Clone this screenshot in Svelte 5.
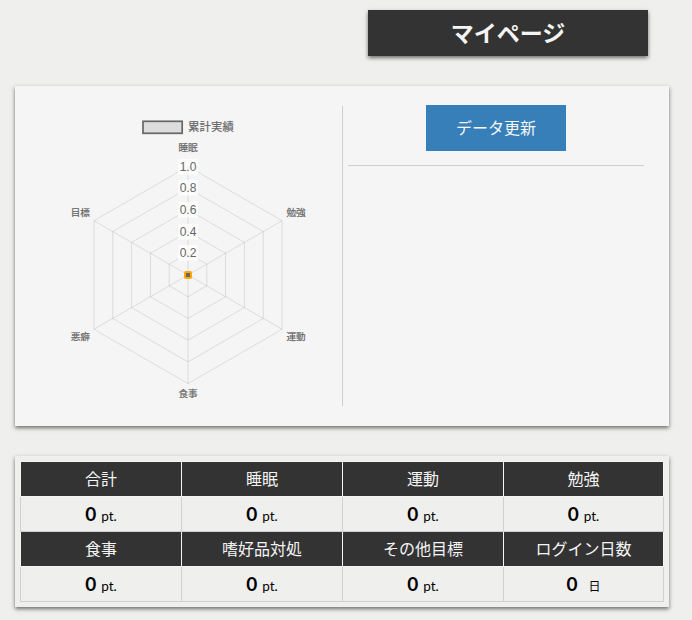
<script>
  const rows = [
    ['合計', '睡眠', '運動', '勉強'],
    ['食事', '嗜好品対処', 'その他目標', 'ログイン日数']
  ];
  const cx = 188, cy = 189, r = 108.6;
  const point = (i, radius) => {
    const a = (Math.PI / 3) * i - Math.PI / 2;
    return [cx + radius * Math.cos(a), cy + radius * Math.sin(a)];
  };
  const rings = [1, 2, 3, 4, 5].map((n) =>
    [0, 1, 2, 3, 4, 5].map((i) => point(i, (r * n) / 5).join(',')).join(' ')
  );
  const spokes = [0, 1, 2, 3, 4, 5].map((i) => point(i, r));
  const ticks = [
    ['1.0', 81], ['0.8', 102], ['0.6', 124], ['0.4', 146], ['0.2', 167]
  ];
  const labels = [
    ['睡眠', 188, 65.3], ['勉強', 296, 129.8], ['運動', 296, 254.3],
    ['食事', 188, 311.3], ['悪癖', 80.3, 254.3], ['目標', 80.3, 129.8]
  ];
</script>

<main>
  <h1>マイページ</h1>
  <section class="summary">
    <div class="chart">
      <svg width="327" height="340" viewBox="15 0 327 340">
        <rect x="143" y="35.3" width="39.2" height="12" fill="#dcdcdc" stroke="#666" stroke-width="1.7" />
        <text class="legend" x="188" y="45" font-size="11.4" textLength="46">累計実績</text>
        <g fill="none" stroke="#000" stroke-opacity=".1" stroke-width="1">
          {#each rings as ring}<polygon points={ring} />{/each}
          {#each spokes as [x, y]}<line x1={cx} y1={cy} x2={x} y2={y} />{/each}
        </g>
        {#each ticks as [label, y]}
          <rect x="178" y={y - 8} width="20" height="15.5" fill="#fff" fill-opacity=".75" />
          <text class="tick" x="188" y={y + 4.2} font-size="12">{label}</text>
        {/each}
        {#each labels as [label, x, y]}
          <text class="axis" {x} {y} font-size="9.6">{label}</text>
        {/each}
        <rect x="184" y="185" width="8" height="8" rx="2" fill="#ffa500" />
        <rect x="186" y="187" width="4" height="4" fill="#666" />
      </svg>
    </div>
    <div class="actions">
      <button>データ更新</button>
    </div>
  </section>
  <section class="points">
    {#each rows as row, r}
      {#each row as name}<div class="head">{name}</div>{/each}
      {#each row as name, c}
        <div class="value">
          <b>0</b><span class:days={r === 1 && c === 3}>{r === 1 && c === 3 ? '日' : 'pt.'}</span>
        </div>
      {/each}
    {/each}
  </section>
</main>

<style>
  :global(body) { margin: 0; background: #efefed; }
  main {
    box-sizing: border-box;
    width: 692px;
    height: 620px;
    padding: 10px 23px 0 15px;
    background: #efefed;
    font-family: "Noto Sans CJK JP", sans-serif;
    color: #000;
    overflow: hidden;
  }
  h1 {
    width: 280px;
    height: 46px;
    margin: 0 0 0 353px;
    background: #333;
    color: #f5f5f5;
    font-size: 23px;
    line-height: 44px;
    text-align: center;
    box-shadow: 0 2px 4px rgba(0, 0, 0, .55);
  }
  .summary, .points {
    box-sizing: border-box;
    width: 654px;
    box-shadow: 0 2px 4px rgba(0, 0, 0, .55);
  }
  .summary {
    display: flex;
    height: 340px;
    margin-top: 30px;
    background: #f5f5f5;
  }
  .chart { width: 327px; }
  svg { display: block; }
  text { fill: #666; font-family: "Liberation Sans", "Noto Sans CJK JP", sans-serif; }
  .legend, .axis { stroke: #666; stroke-width: .2px; }
  .tick, .axis { text-anchor: middle; }
  .actions {
    box-sizing: border-box;
    width: 302px;
    height: 300px;
    margin-top: 20px;
    padding-left: 5px;
    border-left: 1px solid #d0d0d0;
  }
  .actions::after {
    content: "";
    display: block;
    height: 1px;
    margin-top: 14px;
    background: #d0d0d0;
  }
  button {
    display: block;
    width: 140px;
    height: 46px;
    margin: -1px auto 0;
    padding: 0 0 2px;
    border: 0;
    background: #377fb8;
    color: #f5f5f5;
    font: 16px "Noto Sans CJK JP", sans-serif;
  }
  .points {
    display: grid;
    grid-template-columns: 162px 161px 161px 160px;
    grid-template-rows: 36px 35px 35px 35px;
    height: 151px;
    margin-top: 30px;
    padding: 5px;
  }
  .head, .value {
    box-sizing: border-box;
    border-right: 1px solid #d0d0d0;
    border-bottom: 1px solid #d0d0d0;
    text-align: center;
  }
  .head {
    border-color: #f5f5f5;
    background: #333;
    color: #f5f5f5;
    font-size: 16px;
    line-height: 32px;
  }
  .head:nth-child(-n + 4) { border-top: 1px solid #f5f5f5; }
  .head:nth-child(4n + 1) { border-left: 1px solid #f5f5f5; }
  .value:nth-child(4n + 1) { border-left: 1px solid #d0d0d0; }
  .value {
    display: flex;
    justify-content: center;
    align-items: baseline;
    line-height: 34px;
  }
  b { font-family: Lato, sans-serif; font-size: 19px; font-weight: 700; }
  span { margin-left: 5px; font-family: Lato, "Noto Sans CJK JP", sans-serif; font-size: 13.5px; }
  .days { margin-left: 11px; font-size: 12px; }
</style>
